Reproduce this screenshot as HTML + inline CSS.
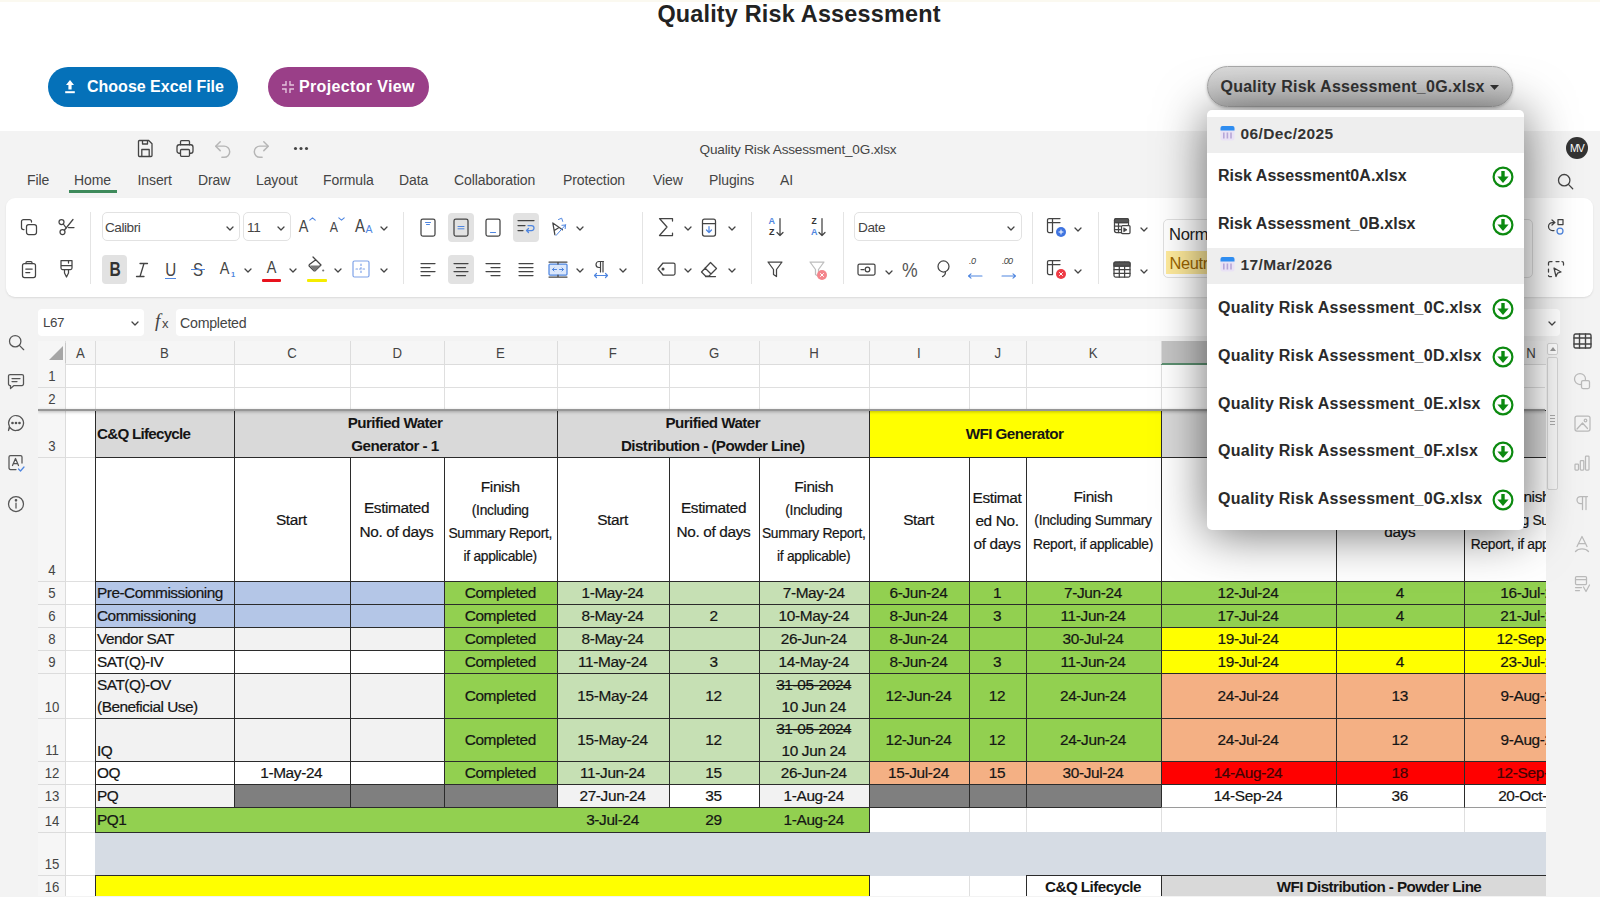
<!DOCTYPE html><html><head><meta charset="utf-8"><title>Quality Risk Assessment</title><style>
*{box-sizing:border-box;margin:0;padding:0}
html,body{width:1600px;height:900px;overflow:hidden;background:#fff}
body{font-family:"Liberation Sans",sans-serif;position:relative;color:#222}
.a{position:absolute}
.t{position:absolute;white-space:nowrap;line-height:1}
svg{position:absolute;overflow:visible}
.btn{position:absolute;border-radius:21px;color:#fff;font-weight:bold;font-size:15.5px}
.mi{position:absolute;top:171.5px;font-size:14px;color:#444;white-space:nowrap;line-height:16px;letter-spacing:-0.1px}
.c{position:absolute;display:flex;align-items:center;justify-content:center;text-align:center;font-size:15.4px;letter-spacing:-0.36px;color:#151515;-webkit-text-stroke:0.2px #151515;white-space:nowrap;line-height:1;padding-right:1.5px}
.c.bk{border:1px solid #2b2b2b}
.c.gl{border:1px solid #e2e2e2}
.c.l{justify-content:flex-start;text-align:left;padding-left:1.5px;letter-spacing:-0.5px}
.c.b{font-weight:bold;letter-spacing:-0.55px;font-size:15.2px;-webkit-text-stroke:0}
.hd{position:absolute;font-size:15px;color:#444;text-align:center;line-height:1;transform:scaleX(.88)}
.ddi{position:absolute;left:11px;font-weight:bold;font-size:16px;color:#2a2a2a;white-space:nowrap;line-height:1;letter-spacing:0px}
.ddh{position:absolute;left:0;width:317px;height:36px;background:#eeeeee}
.ddh span{position:absolute;left:33.5px;top:9px;font-weight:bold;font-size:15.5px;color:#333;line-height:1;letter-spacing:0.38px}
</style></head><body>
<div class="a" style="left:0;top:0;width:1600px;height:2px;background:#fbf9f0"></div>
<div class="t" style="left:498px;width:600px;text-align:center;top:2.5px;left:499px;font-size:23.4px;font-weight:bold;color:#222;letter-spacing:0.2px" id="title">Quality Risk Assessment</div>
<div class="btn" style="left:48px;top:67px;width:190px;height:40px;background:#0571b9"></div>
<svg style="left:63px;top:79px" width="14" height="16" viewBox="0 0 14 16"><path d="M7 1 L11 6 H8.6 V10.5 H5.4 V6 H3 Z" fill="#fff"/><rect x="2.2" y="12.2" width="9.6" height="2" fill="#fff"/></svg>
<div class="t" style="left:87px;top:79.2px;font-size:16px;font-weight:bold;color:#fff" id="b1">Choose Excel File</div>
<div class="btn" style="left:268px;top:67px;width:160.5px;height:40px;background:#9a3f88"></div>
<svg style="left:281px;top:80px" width="14" height="14" viewBox="0 0 14 14" fill="none" stroke="#e3c4dc" stroke-width="1.4"><path d="M5 1v4H1M9 1v4h4M5 13V9H1M9 13V9h4"/></svg>
<div class="t" style="left:299px;top:79.2px;font-size:16px;font-weight:bold;color:#fff;letter-spacing:0.35px" id="b2">Projector View</div>
<div class="a" style="left:1207px;top:66px;width:306px;height:41px;border-radius:21px;background:linear-gradient(#dadada,#bbbbbb);border:1px solid #a8a8a8;box-shadow:0 1px 3px rgba(0,0,0,.25)"></div>
<div class="t" style="left:1220.5px;top:79px;font-size:16px;font-weight:bold;color:#333;letter-spacing:0.25px" id="b3">Quality Risk Assessment_0G.xlsx</div>
<svg style="left:1489.5px;top:85px" width="9" height="5" viewBox="0 0 9 5"><path d="M0 0h9L4.5 5z" fill="#333"/></svg>
<div class="a" style="left:0;top:130.5px;width:1600px;height:766px;background:#f3f3f3"></div>
<div class="t" style="left:598px;width:400px;text-align:center;top:142.5px;font-size:13.6px;color:#444;letter-spacing:-0.18px" id="fname">Quality Risk Assessment_0G.xlsx</div>
<div class="a" style="left:1566px;top:137px;width:22px;height:22px;border-radius:50%;background:#333;color:#fff;font-size:10.5px;text-align:center;line-height:22px;letter-spacing:-0.9px">MV</div>
<svg style="left:137px;top:139px" width="17" height="19" viewBox="0 0 17 19" fill="none" stroke="#444" stroke-width="1.3" stroke-linecap="round" stroke-linejoin="round"><path d="M1.5 2.5a1 1 0 0 1 1-1h9.2l3.3 3.3V16.5a1 1 0 0 1-1 1H2.5a1 1 0 0 1-1-1z"/><path d="M5.5 1.8v3.2h5v-3.200M4.800 17.200v-6.700h7.400v6.700"/></svg>
<svg style="left:176px;top:139px" width="18" height="19" viewBox="0 0 18 18" preserveAspectRatio="none" fill="none" stroke="#444" stroke-width="1.3" stroke-linecap="round" stroke-linejoin="round"><path d="M4.5 5.5v-3a1 1 0 0 1 1-1h7a1 1 0 0 1 1 1v3"/><rect x="1" y="5.5" width="16" height="8" rx="2.2"/><rect x="4.5" y="10" width="9" height="6.5" rx="1" fill="#f3f3f3"/></svg>
<svg style="left:214px;top:139.500px" width="18" height="19" viewBox="0 0 16 17" fill="none" stroke="#b5b5b5" stroke-width="1.3" stroke-linecap="round" stroke-linejoin="round"><path d="M5.5 1.5 1.5 5.5l4 4"/><path d="M1.8 5.5h7.2a5 5 0 0 1 0 10H7"/></svg>
<svg style="left:252px;top:139.500px" width="18" height="19" viewBox="0 0 16 17" fill="none" stroke="#b5b5b5" stroke-width="1.3" stroke-linecap="round" stroke-linejoin="round"><path d="M10.5 1.5l4 4-4 4"/><path d="M14.2 5.5H7a5 5 0 0 0 0 10h2"/></svg>
<svg style="left:294px;top:147px" width="14" height="3" viewBox="0 0 14 3"><circle cx="1.5" cy="1.5" r="1.55" fill="#444"/><circle cx="7" cy="1.5" r="1.55" fill="#444"/><circle cx="12.5" cy="1.5" r="1.55" fill="#444"/></svg>
<div class="mi" id="m0" style="left:27px">File</div>
<div class="mi" id="m1" style="left:74px">Home</div>
<div class="mi" id="m2" style="left:137.5px">Insert</div>
<div class="mi" id="m3" style="left:198px">Draw</div>
<div class="mi" id="m4" style="left:256px">Layout</div>
<div class="mi" id="m5" style="left:323px">Formula</div>
<div class="mi" id="m6" style="left:399px">Data</div>
<div class="mi" id="m7" style="left:454px">Collaboration</div>
<div class="mi" id="m8" style="left:563px">Protection</div>
<div class="mi" id="m9" style="left:653px">View</div>
<div class="mi" id="m10" style="left:709px">Plugins</div>
<div class="mi" id="m11" style="left:780px">AI</div>
<div class="a" style="left:69px;top:190px;width:48px;height:2.5px;background:#3e8a5b"></div>
<svg style="left:1557px;top:173px" width="17" height="17" viewBox="0 0 17 17" fill="none" stroke="#444" stroke-width="1.3" stroke-linecap="round" stroke-linejoin="round"><circle cx="7.2" cy="7.2" r="5.7"/><path d="M11.4 11.4l4.3 4.3"/></svg>
<div class="a" style="left:6px;top:198px;width:1587px;height:99px;background:#fff;border-radius:9px;box-shadow:0 1px 2px rgba(0,0,0,.10)"></div>
<svg style="left:20.0px;top:218.0px" width="18" height="18" viewBox="0 0 18 18" fill="none" stroke="#444" stroke-width="1.25" stroke-linecap="round" stroke-linejoin="round"><rect x="6.5" y="6.5" width="10" height="10" rx="2.2"/><path d="M4 11.5h-.5a2 2 0 0 1-2-2v-6a2 2 0 0 1 2-2h6a2 2 0 0 1 2 2V4"/></svg>
<svg style="left:57.0px;top:218.0px" width="18" height="18" viewBox="0 0 18 18" fill="none" stroke="#444" stroke-width="1.25" stroke-linecap="round" stroke-linejoin="round"><circle cx="4.5" cy="4" r="2.5"/><circle cx="5.5" cy="14" r="2.5"/><path d="M6.3 6l3 4.2M7.5 12 16 1.5M11.5 9.5H17"/></svg>
<svg style="left:21.0px;top:259.5px" width="16" height="19" viewBox="0 0 16 19" fill="none" stroke="#444" stroke-width="1.25" stroke-linecap="round" stroke-linejoin="round"><rect x="1.5" y="3.5" width="13" height="14" rx="2"/><path d="M5 3.5v-1a1 1 0 0 1 1-1h4a1 1 0 0 1 1 1v1M4.8 9h6.4M4.8 12.5h4"/></svg>
<svg style="left:58.5px;top:259.0px" width="15" height="20" viewBox="0 0 15 20" fill="none" stroke="#444" stroke-width="1.25" stroke-linecap="round" stroke-linejoin="round"><path d="M2 1.5h11v7.5a1.5 1.5 0 0 1-1.5 1.5h-8A1.5 1.5 0 0 1 2 9zM2 6.5h11M5.5 10.5v3.5l2 4 2-4v-3.5M9.5 1.5v2.5"/></svg>
<div class="a" style="left:90px;top:212px;width:1px;height:72px;background:#e4e4e4"></div>
<div class="a" style="left:102px;top:212px;width:138px;height:29px;border:1px solid #e2e2e2;border-radius:5px"></div>
<div class="t" style="left:105px;top:221px;font-size:13.6px;color:#444;letter-spacing:-0.45px">Calibri</div>
<svg style="left:226.0px;top:225.5px" width="8" height="5" viewBox="0 0 8 5" fill="none" stroke="#444" stroke-width="1.3" stroke-linecap="round" stroke-linejoin="round"><path d="M1 1l3 3 3-3"/></svg>
<div class="a" style="left:243px;top:212px;width:48px;height:29px;border:1px solid #e2e2e2;border-radius:5px"></div>
<div class="t" style="left:247px;top:221px;font-size:13.6px;color:#444;letter-spacing:-0.3px">11</div>
<svg style="left:277.0px;top:225.5px" width="8" height="5" viewBox="0 0 8 5" fill="none" stroke="#444" stroke-width="1.3" stroke-linecap="round" stroke-linejoin="round"><path d="M1 1l3 3 3-3"/></svg>
<div class="t" style="left:298px;top:218px;font-size:17px;color:#444;transform:scaleX(.85)">A</div>
<svg style="left:308.5px;top:217.0px" width="7" height="4" viewBox="0 0 7 4" fill="none" stroke="#4f86e0" stroke-width="1.1" stroke-linecap="round" stroke-linejoin="round"><path d="M.8 3.2 3.5.8l2.7 2.4"/></svg>
<div class="t" style="left:329px;top:220px;font-size:14.5px;color:#444;transform:scaleX(.85)">A</div>
<svg style="left:337.5px;top:217.0px" width="7" height="4" viewBox="0 0 7 4" fill="none" stroke="#4f86e0" stroke-width="1.1" stroke-linecap="round" stroke-linejoin="round"><path d="M.8.8 3.5 3.2 6.2.8"/></svg>
<div class="t" style="left:354px;top:218px;font-size:17.5px;color:#444;transform:scaleX(.85)">A</div>
<div class="t" style="left:365.5px;top:224px;font-size:10.5px;color:#4f86e0;">A</div>
<svg style="left:380.0px;top:225.5px" width="8" height="5" viewBox="0 0 8 5" fill="none" stroke="#444" stroke-width="1.3" stroke-linecap="round" stroke-linejoin="round"><path d="M1 1l3 3 3-3"/></svg>
<div class="a" style="left:102px;top:255px;width:25px;height:29px;background:#e2e2e2;border-radius:4px"></div>
<div class="t" style="left:108px;top:260px;font-size:19.5px;color:#333;font-weight:bold;transform:scaleX(.8)">B</div>
<svg style="left:135.0px;top:262.0px" width="14" height="16" viewBox="0 0 14 16" fill="none" stroke="#444" stroke-width="1.3" stroke-linecap="round" stroke-linejoin="round"><path d="M5 1.500h7.500M1.500 14.500H9M9 1.500 5 14.500"/></svg>
<div class="t" style="left:163.5px;top:261px;font-size:18.5px;color:#444;transform:scaleX(.82)">U</div>
<div class="a" style="left:165px;top:278px;width:11px;height:1.3px;background:#4f86e0"></div>
<div class="t" style="left:192px;top:261px;font-size:18.5px;color:#444;transform:scaleX(.82)">S</div>
<div class="a" style="left:191px;top:269px;width:14px;height:1.3px;background:#4f86e0"></div>
<div class="t" style="left:219px;top:260px;font-size:17px;color:#444;transform:scaleX(.85)">A</div>
<div class="t" style="left:231px;top:271px;font-size:7.5px;color:#4f86e0;font-weight:bold">1</div>
<svg style="left:244.0px;top:267.5px" width="8" height="5" viewBox="0 0 8 5" fill="none" stroke="#444" stroke-width="1.3" stroke-linecap="round" stroke-linejoin="round"><path d="M1 1l3 3 3-3"/></svg>
<div class="t" style="left:265.5px;top:259px;font-size:17px;color:#444;transform:scaleX(.85)">A</div>
<div class="a" style="left:262px;top:279px;width:19px;height:3px;background:#e8121d;border-radius:1px"></div>
<svg style="left:289.0px;top:267.5px" width="8" height="5" viewBox="0 0 8 5" fill="none" stroke="#444" stroke-width="1.3" stroke-linecap="round" stroke-linejoin="round"><path d="M1 1l3 3 3-3"/></svg>
<svg style="left:306.0px;top:256.0px" width="20" height="20" viewBox="0 0 20 20" fill="none" stroke="#444" stroke-width="1.25" stroke-linecap="round" stroke-linejoin="round"><path d="M8.5 2.5 15 9l-5.6 5.6a1.2 1.2 0 0 1-1.7 0L3.4 10.300a1.2 1.2 0 0 1 0-1.700L9.800 3.800M7 1l2 2"/><path d="M4 9.500h10.500L9.5 14.500H7.500z" fill="#777" stroke="none"/><circle cx="17.200" cy="14.500" r="1.100" fill="#777" stroke="none"/></svg>
<div class="a" style="left:307px;top:279px;width:20px;height:3px;background:#f5ec00;border-radius:1px"></div>
<svg style="left:334.0px;top:267.5px" width="8" height="5" viewBox="0 0 8 5" fill="none" stroke="#444" stroke-width="1.3" stroke-linecap="round" stroke-linejoin="round"><path d="M1 1l3 3 3-3"/></svg>
<svg style="left:352.0px;top:260.0px" width="18" height="18" viewBox="0 0 18 18" fill="none" stroke="#7ea2e8" stroke-width="1.2" stroke-linecap="round" stroke-linejoin="round"><rect x="1" y="1" width="16" height="16" rx="1.500"/><path d="M9 4v10M4 9h10" stroke-dasharray="1.5 2"/></svg>
<svg style="left:380.0px;top:267.5px" width="8" height="5" viewBox="0 0 8 5" fill="none" stroke="#444" stroke-width="1.3" stroke-linecap="round" stroke-linejoin="round"><path d="M1 1l3 3 3-3"/></svg>
<div class="a" style="left:403px;top:212px;width:1px;height:72px;background:#e4e4e4"></div>
<div class="a" style="left:448px;top:213px;width:26px;height:29px;background:#e2e2e2;border-radius:4px"></div>
<div class="a" style="left:513px;top:213px;width:26px;height:29px;background:#e2e2e2;border-radius:4px"></div>
<div class="a" style="left:448px;top:255px;width:26px;height:29px;background:#e2e2e2;border-radius:4px"></div>
<svg style="left:420.0px;top:217.5px" width="16" height="19" viewBox="0 0 16 19" fill="none" stroke="#444" stroke-width="1.25" stroke-linecap="round" stroke-linejoin="round"><rect x="1" y="1" width="14" height="17" rx="1.800"/><path d="M5.500 4.500h5M6.500 6.500h3" stroke="#4f86e0" stroke-width="1"/></svg>
<svg style="left:452.5px;top:217.5px" width="16" height="19" viewBox="0 0 16 19" fill="none" stroke="#444" stroke-width="1.25" stroke-linecap="round" stroke-linejoin="round"><rect x="1" y="1" width="14" height="17" rx="1.800"/><path d="M5 8.500h6M5 10.800h6" stroke="#4f86e0" stroke-width="1"/></svg>
<svg style="left:485.0px;top:217.5px" width="16" height="19" viewBox="0 0 16 19" fill="none" stroke="#444" stroke-width="1.25" stroke-linecap="round" stroke-linejoin="round"><rect x="1" y="1" width="14" height="17" rx="1.800"/><path d="M5.500 14.500h5" stroke="#4f86e0" stroke-width="1.200"/></svg>
<svg style="left:516.5px;top:219.0px" width="18" height="16" viewBox="0 0 18 16" fill="none" stroke="#444" stroke-width="1.25" stroke-linecap="round" stroke-linejoin="round"><path d="M1 1.500h16M1 6.500h7M1 11.500h5"/><path d="M11 6.500h3.500a2.500 2.500 0 0 1 0 5H9.500M11.500 9.500l-2 2 2 2" stroke="#4f86e0"/></svg>
<svg style="left:548.0px;top:217.0px" width="20" height="20" viewBox="0 0 20 20" fill="none" stroke="#444" stroke-width="1.25" stroke-linecap="round" stroke-linejoin="round"><g transform="rotate(-32 8 11)"><path d="M3.500 16 8 5l4.500 11M5.200 12.200h5.600"/></g><path d="M8 18.500 17.500 8M17.500 8l-3.600.3M17.500 8l-.3 3.600M10.500 2.500l3.200-1.300 1 3.200" stroke="#4f86e0" stroke-width="1"/></svg>
<svg style="left:575.5px;top:225.5px" width="8" height="5" viewBox="0 0 8 5" fill="none" stroke="#444" stroke-width="1.3" stroke-linecap="round" stroke-linejoin="round"><path d="M1 1l3 3 3-3"/></svg>
<svg style="left:420.0px;top:261.5px" width="16" height="15" viewBox="0 0 16 15" fill="none" stroke="#444" stroke-width="1.25" stroke-linecap="round" stroke-linejoin="round"><path d="M1 1.500h14M1 5.500h9M1 9.500h14M1 13.500h9"/></svg>
<svg style="left:452.5px;top:261.5px" width="16" height="15" viewBox="0 0 16 15" fill="none" stroke="#444" stroke-width="1.25" stroke-linecap="round" stroke-linejoin="round"><path d="M1 1.500h14M3.500 5.500h9M1 9.500h14M3.500 13.500h9"/></svg>
<svg style="left:485.0px;top:261.5px" width="16" height="15" viewBox="0 0 16 15" fill="none" stroke="#444" stroke-width="1.25" stroke-linecap="round" stroke-linejoin="round"><path d="M1 1.500h14M6 5.500h9M1 9.500h14M6 13.500h9"/></svg>
<svg style="left:517.5px;top:261.5px" width="16" height="15" viewBox="0 0 16 15" fill="none" stroke="#444" stroke-width="1.25" stroke-linecap="round" stroke-linejoin="round"><path d="M1 1.500h14M1 5.500h14M1 9.500h14M1 13.500h14"/></svg>
<svg style="left:548.0px;top:260.5px" width="20" height="17" viewBox="0 0 20 17" fill="none" stroke="#444" stroke-width="1.25" stroke-linecap="round" stroke-linejoin="round"><rect x="1" y="3" width="18" height="11" rx="1" fill="#dbe7fb" stroke="#4f86e0"/><path d="M1 1h18M1 16h18M10 1v2M10 14v2"/><path d="M4.500 8.500h4M6 7 4.500 8.500 6 10M15.500 8.500h-4M14 7l1.500 1.500L14 10" stroke="#4f86e0" stroke-width="1"/></svg>
<svg style="left:575.5px;top:267.5px" width="8" height="5" viewBox="0 0 8 5" fill="none" stroke="#444" stroke-width="1.3" stroke-linecap="round" stroke-linejoin="round"><path d="M1 1l3 3 3-3"/></svg>
<svg style="left:593.0px;top:260.0px" width="16" height="18" viewBox="0 0 16 18" fill="none" stroke="#444" stroke-width="1.2" stroke-linecap="round" stroke-linejoin="round"><path d="M10.500 1.500H6a3 3 0 0 0 0 6h1.500M7.500 1.500V12M10 1.500V12"/><path d="M1.500 15.500h13M3.500 13.500l-2 2 2 2M12.500 13.500l2 2-2 2" stroke="#4f86e0"/></svg>
<svg style="left:618.5px;top:267.5px" width="8" height="5" viewBox="0 0 8 5" fill="none" stroke="#444" stroke-width="1.3" stroke-linecap="round" stroke-linejoin="round"><path d="M1 1l3 3 3-3"/></svg>
<div class="a" style="left:642px;top:212px;width:1px;height:72px;background:#e4e4e4"></div>
<svg style="left:658.0px;top:217.0px" width="16" height="20" viewBox="0 0 16 20" fill="none" stroke="#444" stroke-width="1.25" stroke-linecap="round" stroke-linejoin="round"><path d="M14.500 4V1.500H1.500L9 10l-7.500 8.500h13V16"/></svg>
<svg style="left:684.0px;top:225.5px" width="8" height="5" viewBox="0 0 8 5" fill="none" stroke="#444" stroke-width="1.3" stroke-linecap="round" stroke-linejoin="round"><path d="M1 1l3 3 3-3"/></svg>
<svg style="left:701.0px;top:217.5px" width="16" height="19" viewBox="0 0 16 19" fill="none" stroke="#444" stroke-width="1.25" stroke-linecap="round" stroke-linejoin="round"><rect x="1.500" y="1" width="13" height="17" rx="2"/><path d="M1.500 5.500h13"/><path d="M8 8.500v6M5.500 12l2.500 2.500 2.500-2.500" stroke="#4f86e0"/></svg>
<svg style="left:727.5px;top:225.5px" width="8" height="5" viewBox="0 0 8 5" fill="none" stroke="#444" stroke-width="1.3" stroke-linecap="round" stroke-linejoin="round"><path d="M1 1l3 3 3-3"/></svg>
<svg style="left:656.5px;top:262.0px" width="19" height="14" viewBox="0 0 19 14" fill="none" stroke="#444" stroke-width="1.25" stroke-linecap="round" stroke-linejoin="round"><path d="M6 1h10.500a1.500 1.500 0 0 1 1.500 1.500v9a1.500 1.500 0 0 1-1.500 1.500H6L1 7z"/><circle cx="6" cy="7" r=".900" fill="#444"/></svg>
<svg style="left:684.0px;top:267.5px" width="8" height="5" viewBox="0 0 8 5" fill="none" stroke="#444" stroke-width="1.3" stroke-linecap="round" stroke-linejoin="round"><path d="M1 1l3 3 3-3"/></svg>
<svg style="left:700.0px;top:260.5px" width="18" height="17" viewBox="0 0 18 17" fill="none" stroke="#444" stroke-width="1.25" stroke-linecap="round" stroke-linejoin="round"><path d="M10.500 1.500l6 6-7.500 7.500H5.500L1.500 11zM5 7l6 6M5.500 15.500h10"/></svg>
<svg style="left:727.5px;top:267.5px" width="8" height="5" viewBox="0 0 8 5" fill="none" stroke="#444" stroke-width="1.3" stroke-linecap="round" stroke-linejoin="round"><path d="M1 1l3 3 3-3"/></svg>
<div class="a" style="left:751px;top:212px;width:1px;height:72px;background:#e4e4e4"></div>
<div class="t" style="left:768.5px;top:217px;font-size:9px;color:#4f86e0;font-weight:bold">A</div>
<div class="t" style="left:769px;top:227.5px;font-size:9px;color:#333;font-weight:bold">Z</div>
<svg style="left:775.5px;top:217.0px" width="8" height="20" viewBox="0 0 8 20" fill="none" stroke="#444" stroke-width="1.25" stroke-linecap="round" stroke-linejoin="round"><path d="M4 1.500v17M1 15.500l3 3 3-3"/></svg>
<div class="t" style="left:811.5px;top:217px;font-size:8.5px;color:#333;font-weight:bold">Z</div>
<div class="t" style="left:811px;top:227.5px;font-size:9px;color:#4f86e0;font-weight:bold">A</div>
<svg style="left:818.0px;top:217.0px" width="8" height="20" viewBox="0 0 8 20" fill="none" stroke="#444" stroke-width="1.25" stroke-linecap="round" stroke-linejoin="round"><path d="M4 1.500v17M1 15.500l3 3 3-3"/></svg>
<svg style="left:767.0px;top:260.5px" width="16" height="17" viewBox="0 0 16 17" fill="none" stroke="#444" stroke-width="1.25" stroke-linecap="round" stroke-linejoin="round"><path d="M1 1h14L9.500 8.500v7l-3-2v-5z"/></svg>
<svg style="left:809.0px;top:260.5px" width="16" height="17" viewBox="0 0 16 17" fill="none" stroke="#bdbdbd" stroke-width="1.25" stroke-linecap="round" stroke-linejoin="round"><path d="M1 1h14L9.500 8.500v7l-3-2v-5z"/></svg>
<div class="a" style="left:817px;top:270px;width:10px;height:10px;border-radius:50%;background:#f4858c"></div>
<svg style="left:819.0px;top:272.0px" width="6" height="6" viewBox="0 0 6 6" fill="none" stroke="#fff" stroke-width="1" stroke-linecap="round" stroke-linejoin="round"><path d="M1.500 1.500l3 3M4.500 1.500l-3 3"/></svg>
<div class="a" style="left:843px;top:212px;width:1px;height:72px;background:#e4e4e4"></div>
<div class="a" style="left:854px;top:212px;width:168px;height:29px;border:1px solid #e2e2e2;border-radius:5px"></div>
<div class="t" style="left:858px;top:221px;font-size:13.6px;color:#444;letter-spacing:-0.4px">Date</div>
<svg style="left:1007.0px;top:225.5px" width="8" height="5" viewBox="0 0 8 5" fill="none" stroke="#444" stroke-width="1.3" stroke-linecap="round" stroke-linejoin="round"><path d="M1 1l3 3 3-3"/></svg>
<svg style="left:856.5px;top:262.5px" width="19" height="13" viewBox="0 0 19 13" fill="none" stroke="#444" stroke-width="1.25" stroke-linecap="round" stroke-linejoin="round"><rect x="1" y="1" width="17" height="11" rx="1.500"/><circle cx="10.500" cy="6.500" r="2.300"/><path d="M4 6.500h3"/></svg>
<svg style="left:885.0px;top:269.5px" width="8" height="5" viewBox="0 0 8 5" fill="none" stroke="#444" stroke-width="1.3" stroke-linecap="round" stroke-linejoin="round"><path d="M1 1l3 3 3-3"/></svg>
<div class="t" style="left:901px;top:259.5px;font-size:20px;color:#555;transform:scaleX(.88)">%</div>
<svg style="left:936.5px;top:260.0px" width="13" height="18" viewBox="0 0 13 18" fill="none" stroke="#444" stroke-width="1.25" stroke-linecap="round" stroke-linejoin="round"><circle cx="6.500" cy="6.500" r="5.500"/><path d="M8.500 11.600c0 3-1.500 4.500-3 5"/></svg>
<div class="t" style="left:969px;top:257px;font-size:9px;color:#444;font-style:italic;letter-spacing:-0.5px">.0</div>
<svg style="left:967.0px;top:273.0px" width="16" height="6" viewBox="0 0 16 6" fill="none" stroke="#4f86e0" stroke-width="1.1" stroke-linecap="round" stroke-linejoin="round"><path d="M15 3H1.500M4 .8 1.500 3 4 5.200"/></svg>
<div class="t" style="left:1002px;top:257px;font-size:9px;color:#444;font-style:italic;letter-spacing:-0.8px">.00</div>
<svg style="left:1001.0px;top:273.0px" width="16" height="6" viewBox="0 0 16 6" fill="none" stroke="#4f86e0" stroke-width="1.1" stroke-linecap="round" stroke-linejoin="round"><path d="M1 3h13.500M12 .8 14.500 3 12 5.200"/></svg>
<div class="a" style="left:1032px;top:212px;width:1px;height:72px;background:#e4e4e4"></div>
<svg style="left:1046.0px;top:217.0px" width="18" height="18" viewBox="0 0 18 18" fill="none" stroke="#444" stroke-width="1.25" stroke-linecap="round" stroke-linejoin="round"><path d="M14 1.500H3a1.500 1.500 0 0 0-1.500 1.500v11A1.500 1.500 0 0 0 3 15.500h3.500M1.500 5.500H14M6.500 1.500v14"/></svg>
<div class="a" style="left:1056px;top:227px;width:10px;height:10px;border-radius:50%;background:#3f74e0"></div>
<svg style="left:1058.0px;top:229.0px" width="6" height="6" viewBox="0 0 6 6" fill="none" stroke="#fff" stroke-width="1" stroke-linecap="round" stroke-linejoin="round"><path d="M3 1v4M1 3h4"/></svg>
<svg style="left:1074.0px;top:226.5px" width="8" height="5" viewBox="0 0 8 5" fill="none" stroke="#444" stroke-width="1.3" stroke-linecap="round" stroke-linejoin="round"><path d="M1 1l3 3 3-3"/></svg>
<svg style="left:1046.0px;top:259.0px" width="18" height="18" viewBox="0 0 18 18" fill="none" stroke="#444" stroke-width="1.25" stroke-linecap="round" stroke-linejoin="round"><path d="M14 1.500H3a1.500 1.500 0 0 0-1.500 1.500v11A1.500 1.500 0 0 0 3 15.500h3.500M1.500 5.500H14M6.500 1.500v14"/></svg>
<div class="a" style="left:1056px;top:269px;width:10px;height:10px;border-radius:50%;background:#ee3b45"></div>
<svg style="left:1058.0px;top:271.0px" width="6" height="6" viewBox="0 0 6 6" fill="none" stroke="#fff" stroke-width="1" stroke-linecap="round" stroke-linejoin="round"><path d="M1.500 1.500l3 3M4.500 1.500l-3 3"/></svg>
<svg style="left:1074.0px;top:268.5px" width="8" height="5" viewBox="0 0 8 5" fill="none" stroke="#444" stroke-width="1.3" stroke-linecap="round" stroke-linejoin="round"><path d="M1 1l3 3 3-3"/></svg>
<div class="a" style="left:1098px;top:212px;width:1px;height:72px;background:#e4e4e4"></div>
<svg style="left:1113.0px;top:217.0px" width="18" height="18" viewBox="0 0 18 18" fill="none" stroke="#444" stroke-width="1.25" stroke-linecap="round" stroke-linejoin="round"><rect x="1.500" y="1.500" width="14" height="14" rx="2"/><path d="M1.500 5.500h14M1.500 9h6M1.500 12.500h6M5.500 5.500v10"/><rect x="8.500" y="8.500" width="8.500" height="8" rx="1" fill="#fff"/><path d="M11 11l3 1.800-3 1.800z" fill="#444" stroke-width=".8"/><rect x="1.500" y="1.500" width="14" height="4" fill="#555" rx="1.500"/></svg>
<svg style="left:1140.0px;top:226.5px" width="8" height="5" viewBox="0 0 8 5" fill="none" stroke="#444" stroke-width="1.3" stroke-linecap="round" stroke-linejoin="round"><path d="M1 1l3 3 3-3"/></svg>
<svg style="left:1113.0px;top:260.5px" width="18" height="17" viewBox="0 0 18 17" fill="none" stroke="#444" stroke-width="1.25" stroke-linecap="round" stroke-linejoin="round"><rect x="1" y="1" width="16" height="15" rx="1.500"/><path d="M1 5h16M1 8.700h16M1 12.400h16M6.300 1v15M11.600 1v15"/><rect x="1" y="1" width="16" height="4" fill="#555" rx="1"/></svg>
<svg style="left:1140.0px;top:268.5px" width="8" height="5" viewBox="0 0 8 5" fill="none" stroke="#444" stroke-width="1.3" stroke-linecap="round" stroke-linejoin="round"><path d="M1 1l3 3 3-3"/></svg>
<div class="a" style="left:1163px;top:218.500px;width:370px;height:59px;border:1px solid #e0e0e0;border-radius:5px"></div>
<div class="t" style="left:1169px;top:226.5px;font-size:16.6px;color:#222;letter-spacing:-0.35px">Normal</div>
<div class="a" style="left:1166px;top:251px;width:80px;height:23px;background:#ffeb9c"></div>
<div class="t" style="left:1169.5px;top:255px;font-size:16.4px;color:#9c6500;letter-spacing:-0.35px">Neutral</div>
<svg style="left:1547.0px;top:218.0px" width="18" height="18" viewBox="0 0 18 18" fill="none" stroke="#444" stroke-width="1.25" stroke-linecap="round" stroke-linejoin="round"><path d="M8 4.500H5.500a4 4 0 0 0 0 8H7M5 2 7.800 4.500 5 7"/><rect x="11" y="1.500" width="5" height="5"/><circle cx="13" cy="13" r="3" stroke="#4f86e0"/></svg>
<svg style="left:1547.0px;top:260.0px" width="18" height="18" viewBox="0 0 18 18" fill="none" stroke="#444" stroke-width="1.25" stroke-linecap="round" stroke-linejoin="round"><path d="M1.500 5V3a1.500 1.500 0 0 1 1.500-1.500h2M9 1.500h3M15 1.500a1.500 1.500 0 0 1 1.500 1.500v2M1.500 9v3M1.500 15.500v0a1 1 0 0 0 1 1h2M7 8l7 4-3.500 1.200L9 16.500z"/></svg>
<div class="a" style="left:38px;top:309px;width:106px;height:27px;background:#fff;border-radius:4px"></div>
<div class="t" style="left:43px;top:316px;font-size:13.4px;color:#444;letter-spacing:-0.5px">L67</div>
<svg style="left:131px;top:321px" width="8" height="5" viewBox="0 0 8 5" fill="none" stroke="#444" stroke-width="1.3" stroke-linecap="round" stroke-linejoin="round"><path d="M1 1l3 3 3-3"/></svg>
<div class="t" style="left:155px;top:311px;font-size:19px;color:#444;font-family:'Liberation Serif',serif;font-style:italic">f</div>
<div class="t" style="left:162px;top:317px;font-size:13px;color:#444">x</div>
<div class="a" style="left:176px;top:309px;width:1384px;height:27px;background:#fff;border-radius:4px"></div>
<div class="t" style="left:180px;top:316px;font-size:14.2px;color:#444;letter-spacing:-0.25px" id="fx">Completed</div>
<svg style="left:1548px;top:321px" width="8" height="5" viewBox="0 0 8 5" fill="none" stroke="#444" stroke-width="1.3" stroke-linecap="round" stroke-linejoin="round"><path d="M1 1l3 3 3-3"/></svg>
<svg style="left:7.5px;top:333.5px" width="17" height="17" viewBox="0 0 17 17" fill="none" stroke="#555" stroke-width="1.25" stroke-linecap="round" stroke-linejoin="round"><circle cx="7.200" cy="7.200" r="5.700"/><path d="M11.400 11.400l4.300 4.300"/></svg>
<svg style="left:7.0px;top:372.5px" width="18" height="17" viewBox="0 0 18 17" fill="none" stroke="#555" stroke-width="1.25" stroke-linecap="round" stroke-linejoin="round"><path d="M3 1.500h12a1.500 1.500 0 0 1 1.500 1.500v8a1.500 1.500 0 0 1-1.500 1.500H7l-3.500 3v-3H3A1.500 1.500 0 0 1 1.500 11V3A1.500 1.500 0 0 1 3 1.500zM5 5.500h8M5 8.500h5"/></svg>
<svg style="left:7.0px;top:414.0px" width="18" height="18" viewBox="0 0 18 18" fill="none" stroke="#555" stroke-width="1.25" stroke-linecap="round" stroke-linejoin="round"><path d="M9 1.500a7.500 7.500 0 1 1-6.300 11.600L1.500 16.500l.9-4.200A7.500 7.500 0 0 1 9 1.500z"/><circle cx="5.500" cy="9" r=".7" fill="#555"/><circle cx="9" cy="9" r=".7" fill="#555"/><circle cx="12.500" cy="9" r=".7" fill="#555"/></svg>
<svg style="left:7.0px;top:453.5px" width="18" height="19" viewBox="0 0 18 19" fill="none" stroke="#555" stroke-width="1.25" stroke-linecap="round" stroke-linejoin="round"><path d="M15 9V3a1.500 1.500 0 0 0-1.500-1.500h-10A1.500 1.500 0 0 0 2 3v11a1.500 1.500 0 0 0 1.500 1.500H9M5.500 11.500 8.500 4.500l3 7M6.500 9.500h4"/><path d="M11.500 15l2 2 3.500-4" stroke="#4f86e0"/></svg>
<svg style="left:7.0px;top:495.0px" width="18" height="18" viewBox="0 0 18 18" fill="none" stroke="#555" stroke-width="1.25" stroke-linecap="round" stroke-linejoin="round"><circle cx="9" cy="9" r="7.500"/><path d="M9 8v5"/><circle cx="9" cy="5.300" r=".7" fill="#555"/></svg>
<svg style="left:1572.5px;top:333.0px" width="19" height="16" viewBox="0 0 19 16" fill="none" stroke="#444" stroke-width="1.4" stroke-linecap="round" stroke-linejoin="round"><rect x="1" y="1" width="17" height="14" rx="1.500"/><path d="M1 5h17M1 11h17M6.500 1v14M12.500 1v14"/></svg>
<svg style="left:1573.0px;top:372.0px" width="18" height="18" viewBox="0 0 18 18" fill="none" stroke="#b9b9b9" stroke-width="1.25" stroke-linecap="round" stroke-linejoin="round"><circle cx="7" cy="7" r="5.500"/><rect x="8.500" y="8.500" width="8" height="8" rx="1.500" fill="#f3f3f3"/></svg>
<svg style="left:1573.5px;top:414.5px" width="17" height="17" viewBox="0 0 17 17" fill="none" stroke="#b9b9b9" stroke-width="1.25" stroke-linecap="round" stroke-linejoin="round"><rect x="1" y="1" width="15" height="15" rx="2"/><path d="M3 14l5.500-6 5 5.500"/><circle cx="11.500" cy="5.500" r="1.300"/></svg>
<svg style="left:1574.0px;top:455.0px" width="16" height="16" viewBox="0 0 16 16" fill="none" stroke="#b9b9b9" stroke-width="1.25" stroke-linecap="round" stroke-linejoin="round"><rect x="1" y="9" width="3.500" height="6" rx=".8"/><rect x="6.300" y="5.500" width="3.500" height="9.500" rx=".8"/><rect x="11.500" y="1" width="3.500" height="14" rx=".8"/></svg>
<svg style="left:1575.0px;top:495.0px" width="14" height="16" viewBox="0 0 14 16" fill="none" stroke="#b9b9b9" stroke-width="1.25" stroke-linecap="round" stroke-linejoin="round"><path d="M12.500 1.500H5.500a3.500 3.500 0 0 0 0 7h2M7.500 1.500v13M11 1.500v13"/></svg>
<svg style="left:1574.0px;top:535.0px" width="16" height="18" viewBox="0 0 16 18" fill="none" stroke="#b9b9b9" stroke-width="1.25" stroke-linecap="round" stroke-linejoin="round"><path d="M3 11.500 8 1.500l5 10M4.500 8.500h7M1.500 16.500c3-3.500 10-3.500 13 0"/></svg>
<svg style="left:1573.5px;top:575.0px" width="17" height="18" viewBox="0 0 17 18" fill="none" stroke="#b9b9b9" stroke-width="1.25" stroke-linecap="round" stroke-linejoin="round"><rect x="1.500" y="1.500" width="11" height="8" rx="1"/><path d="M1.500 4.500h11M1.500 12.500h6M1.500 15.500h4M9.500 12l2.500 4.500L15.500 10"/></svg>
<div class="a" style="left:1547px;top:343px;width:11px;height:12px;background:#fff;border:1px solid #d5d5d5;border-radius:2px"></div>
<svg style="left:1549.500px;top:347px" width="6" height="4" viewBox="0 0 6 4"><path d="M0 4h6L3 0z" fill="#999"/></svg>
<div class="a" style="left:1547px;top:357px;width:11px;height:133px;background:#f7f7f7;border:1px solid #d5d5d5;border-radius:2px"></div>
<div class="a" style="left:1550px;top:415px;width:5px;height:1px;background:#aaa"></div><div class="a" style="left:1550px;top:418px;width:5px;height:1px;background:#aaa"></div><div class="a" style="left:1550px;top:421px;width:5px;height:1px;background:#aaa"></div><div class="a" style="left:1550px;top:424px;width:5px;height:1px;background:#aaa"></div>
<div class="a" id="grid" style="left:38px;top:341px;width:1507.5px;height:555px;overflow:hidden;background:#fff">
<div class="a" style="left:56.5px;top:0;width:1px;height:556px;background:#dfdfdf"></div>
<div class="a" style="left:195.5px;top:0;width:1px;height:556px;background:#dfdfdf"></div>
<div class="a" style="left:311.5px;top:0;width:1px;height:556px;background:#dfdfdf"></div>
<div class="a" style="left:406px;top:0;width:1px;height:556px;background:#dfdfdf"></div>
<div class="a" style="left:519px;top:0;width:1px;height:556px;background:#dfdfdf"></div>
<div class="a" style="left:630.5px;top:0;width:1px;height:556px;background:#dfdfdf"></div>
<div class="a" style="left:721px;top:0;width:1px;height:556px;background:#dfdfdf"></div>
<div class="a" style="left:831px;top:0;width:1px;height:556px;background:#dfdfdf"></div>
<div class="a" style="left:930.5px;top:0;width:1px;height:556px;background:#dfdfdf"></div>
<div class="a" style="left:988px;top:0;width:1px;height:556px;background:#dfdfdf"></div>
<div class="a" style="left:1122.5px;top:0;width:1px;height:556px;background:#dfdfdf"></div>
<div class="a" style="left:1298px;top:0;width:1px;height:556px;background:#dfdfdf"></div>
<div class="a" style="left:1426px;top:0;width:1px;height:556px;background:#dfdfdf"></div>
<div class="a" style="left:1560px;top:0;width:1px;height:556px;background:#dfdfdf"></div>
<div class="a" style="left:0;top:46px;width:1507px;height:1px;background:#dfdfdf"></div>
<div class="a" style="left:0;top:69px;width:1507px;height:1px;background:#dfdfdf"></div>
<div class="a" style="left:0;top:116px;width:1507px;height:1px;background:#dfdfdf"></div>
<div class="a" style="left:0;top:240px;width:1507px;height:1px;background:#dfdfdf"></div>
<div class="a" style="left:0;top:263px;width:1507px;height:1px;background:#dfdfdf"></div>
<div class="a" style="left:0;top:286px;width:1507px;height:1px;background:#dfdfdf"></div>
<div class="a" style="left:0;top:309px;width:1507px;height:1px;background:#dfdfdf"></div>
<div class="a" style="left:0;top:332px;width:1507px;height:1px;background:#dfdfdf"></div>
<div class="a" style="left:0;top:377px;width:1507px;height:1px;background:#dfdfdf"></div>
<div class="a" style="left:0;top:420px;width:1507px;height:1px;background:#dfdfdf"></div>
<div class="a" style="left:0;top:443px;width:1507px;height:1px;background:#dfdfdf"></div>
<div class="a" style="left:0;top:466px;width:1507px;height:1px;background:#dfdfdf"></div>
<div class="a" style="left:0;top:491px;width:1507px;height:1px;background:#dfdfdf"></div>
<div class="a" style="left:0;top:534px;width:1507px;height:1px;background:#dfdfdf"></div>
<div class="a" style="left:0;top:557px;width:1507px;height:1px;background:#dfdfdf"></div>
<div class="a" style="left:0;top:0;width:1508px;height:24px;background:#f6f6f6;border-bottom:1px solid #dcdcdc"></div>
<div class="a" style="left:0;top:0;width:28px;height:556px;background:#f6f6f6;border-right:1px solid #dcdcdc"></div>
<div class="a" style="left:1122.5px;top:0;width:175.5px;height:24px;background:#c5c5c5;border-bottom:2px solid #5c8f70"></div>
<div class="hd" style="left:27.5px;width:29.0px;top:4px">A</div>
<div class="hd" style="left:56.5px;width:139.0px;top:4px">B</div>
<div class="a" style="left:56.5px;top:0;width:1px;height:23px;background:#dcdcdc"></div>
<div class="hd" style="left:195.5px;width:116.0px;top:4px">C</div>
<div class="a" style="left:195.5px;top:0;width:1px;height:23px;background:#dcdcdc"></div>
<div class="hd" style="left:311.5px;width:94.5px;top:4px">D</div>
<div class="a" style="left:311.5px;top:0;width:1px;height:23px;background:#dcdcdc"></div>
<div class="hd" style="left:406px;width:113px;top:4px">E</div>
<div class="a" style="left:406px;top:0;width:1px;height:23px;background:#dcdcdc"></div>
<div class="hd" style="left:519px;width:111.5px;top:4px">F</div>
<div class="a" style="left:519px;top:0;width:1px;height:23px;background:#dcdcdc"></div>
<div class="hd" style="left:630.5px;width:90.5px;top:4px">G</div>
<div class="a" style="left:630.5px;top:0;width:1px;height:23px;background:#dcdcdc"></div>
<div class="hd" style="left:721px;width:110px;top:4px">H</div>
<div class="a" style="left:721px;top:0;width:1px;height:23px;background:#dcdcdc"></div>
<div class="hd" style="left:831px;width:99.5px;top:4px">I</div>
<div class="a" style="left:831px;top:0;width:1px;height:23px;background:#dcdcdc"></div>
<div class="hd" style="left:930.5px;width:57.5px;top:4px">J</div>
<div class="a" style="left:930.5px;top:0;width:1px;height:23px;background:#dcdcdc"></div>
<div class="hd" style="left:988px;width:134.5px;top:4px">K</div>
<div class="a" style="left:988px;top:0;width:1px;height:23px;background:#dcdcdc"></div>
<div class="hd" style="left:1122.5px;width:175.5px;top:4px">L</div>
<div class="a" style="left:1122.5px;top:0;width:1px;height:23px;background:#dcdcdc"></div>
<div class="hd" style="left:1298px;width:128px;top:4px">M</div>
<div class="a" style="left:1298px;top:0;width:1px;height:23px;background:#dcdcdc"></div>
<div class="hd" style="left:1426px;width:134px;top:4px">N</div>
<div class="a" style="left:1426px;top:0;width:1px;height:23px;background:#dcdcdc"></div>
<svg style="left:11px;top:5px" width="15" height="15" viewBox="0 0 15 15"><path d="M14 0V14H0z" fill="#a6a6a6"/></svg>
<div class="a" style="left:27px;top:2px;width:1px;height:20px;background:#c9c9c9"></div>
<div class="hd" style="left:0;width:28px;top:26.5px">1</div>
<div class="a" style="left:0;top:46px;width:28px;height:1px;background:#dcdcdc"></div>
<div class="hd" style="left:0;width:28px;top:49.5px">2</div>
<div class="a" style="left:0;top:69px;width:28px;height:1px;background:#dcdcdc"></div>
<div class="hd" style="left:0;width:28px;top:96.5px">3</div>
<div class="a" style="left:0;top:116px;width:28px;height:1px;background:#dcdcdc"></div>
<div class="hd" style="left:0;width:28px;top:220.5px">4</div>
<div class="a" style="left:0;top:240px;width:28px;height:1px;background:#dcdcdc"></div>
<div class="hd" style="left:0;width:28px;top:243.5px">5</div>
<div class="a" style="left:0;top:263px;width:28px;height:1px;background:#dcdcdc"></div>
<div class="hd" style="left:0;width:28px;top:266.5px">6</div>
<div class="a" style="left:0;top:286px;width:28px;height:1px;background:#dcdcdc"></div>
<div class="hd" style="left:0;width:28px;top:289.5px">8</div>
<div class="a" style="left:0;top:309px;width:28px;height:1px;background:#dcdcdc"></div>
<div class="hd" style="left:0;width:28px;top:312.5px">9</div>
<div class="a" style="left:0;top:332px;width:28px;height:1px;background:#dcdcdc"></div>
<div class="hd" style="left:0;width:28px;top:357.5px">10</div>
<div class="a" style="left:0;top:377px;width:28px;height:1px;background:#dcdcdc"></div>
<div class="hd" style="left:0;width:28px;top:400.5px">11</div>
<div class="a" style="left:0;top:420px;width:28px;height:1px;background:#dcdcdc"></div>
<div class="hd" style="left:0;width:28px;top:423.5px">12</div>
<div class="a" style="left:0;top:443px;width:28px;height:1px;background:#dcdcdc"></div>
<div class="hd" style="left:0;width:28px;top:446.5px">13</div>
<div class="a" style="left:0;top:466px;width:28px;height:1px;background:#dcdcdc"></div>
<div class="hd" style="left:0;width:28px;top:471.5px">14</div>
<div class="a" style="left:0;top:491px;width:28px;height:1px;background:#dcdcdc"></div>
<div class="hd" style="left:0;width:28px;top:514.5px">15</div>
<div class="a" style="left:0;top:534px;width:28px;height:1px;background:#dcdcdc"></div>
<div class="hd" style="left:0;width:28px;top:537.5px">16</div>
<div class="a" style="left:0;top:557px;width:28px;height:1px;background:#dcdcdc"></div>
<div class="c " style="left:56.5px;top:491px;width:1504.5px;height:44px;background:#d6dce4;"></div>
<div class="c bk" style="left:56.5px;top:534px;width:775.5px;height:24px;background:#ffff00;"></div>
<div class="c bk b" style="left:988px;top:534px;width:135.5px;height:24px;background:#ffffff;"><div>C&amp;Q Lifecycle</div></div>
<div class="c bk b" style="left:1122.5px;top:534px;width:438.5px;height:24px;background:#d9d9d9;"><div>WFI Distribution - Powder Line</div></div>
<div class="c bk b l" style="left:56.5px;top:69px;width:140.0px;height:48px;background:#d9d9d9;letter-spacing:-0.75px;"><div>C&amp;Q Lifecycle</div></div>
<div class="c bk b" style="left:195.5px;top:69px;width:324.5px;height:48px;background:#d9d9d9;line-height:23px;padding-bottom:1px;"><div>Purified Water<br>Generator - 1</div></div>
<div class="c bk b" style="left:519px;top:69px;width:313px;height:48px;background:#d9d9d9;line-height:23px;padding-bottom:1px;"><div>Purified Water<br>Distribution - (Powder Line)</div></div>
<div class="c bk b" style="left:831px;top:69px;width:292.5px;height:48px;background:#ffff00;"><div>WFI Generator</div></div>
<div class="c bk b" style="left:1122.5px;top:69px;width:438.5px;height:48px;background:#d9d9d9;"></div>
<div class="c bk" style="left:56.5px;top:116px;width:140.0px;height:125px;background:#ffffff;"></div>
<div class="c bk" style="left:195.5px;top:116px;width:117.0px;height:125px;background:#ffffff;"><div>Start</div></div>
<div class="c bk" style="left:311.5px;top:116px;width:95.5px;height:125px;background:#ffffff;line-height:24px;"><div>Estimated<br>No. of days</div></div>
<div class="c bk" style="left:406px;top:116px;width:114px;height:125px;background:#ffffff;line-height:22px;padding-top:2px;"><div><div style="line-height:25px">Finish</div><span style="font-size:13.8px;letter-spacing:-0.3px">(Including<br>Summary Report,<br>if applicable)</span></div></div>
<div class="c bk" style="left:519px;top:116px;width:112.5px;height:125px;background:#ffffff;"><div>Start</div></div>
<div class="c bk" style="left:630.5px;top:116px;width:91.5px;height:125px;background:#ffffff;line-height:24px;"><div>Estimated<br>No. of days</div></div>
<div class="c bk" style="left:721px;top:116px;width:111px;height:125px;background:#ffffff;line-height:22px;padding-top:2px;"><div><div style="line-height:25px">Finish</div><span style="font-size:13.8px;letter-spacing:-0.3px">(Including<br>Summary Report,<br>if applicable)</span></div></div>
<div class="c bk" style="left:831px;top:116px;width:100.5px;height:125px;background:#ffffff;"><div>Start</div></div>
<div class="c bk" style="left:930.5px;top:116px;width:58.5px;height:125px;background:#ffffff;line-height:23px;padding-top:1.5px;"><div>Estimat<br>ed No.<br>of days</div></div>
<div class="c bk" style="left:988px;top:116px;width:135.5px;height:125px;background:#ffffff;line-height:23px;padding-top:1.5px;"><div>Finish<br><span style="font-size:13.8px;letter-spacing:-0.3px">(Including Summary<br>Report, if applicable)</span></div></div>
<div class="c bk" style="left:1122.5px;top:116px;width:176.5px;height:125px;background:#ffffff;"><div>Start</div></div>
<div class="c bk" style="left:1298px;top:116px;width:129px;height:125px;background:#ffffff;line-height:24px;"><div>Estimated No. of<br>days</div></div>
<div class="c bk" style="left:1426px;top:116px;width:135px;height:125px;background:#ffffff;line-height:23px;padding-top:1.5px;"><div>Finish<br><span style="font-size:13.8px;letter-spacing:-0.3px">(Including Summary<br>Report, if applicable)</span></div></div>
<div class="c bk l" style="left:56.5px;top:240px;width:140.0px;height:24px;background:#b4c6e7;"><div>Pre-Commissioning</div></div>
<div class="c bk" style="left:195.5px;top:240px;width:117.0px;height:24px;background:#b4c6e7;"></div>
<div class="c bk" style="left:311.5px;top:240px;width:95.5px;height:24px;background:#b4c6e7;"></div>
<div class="c bk" style="left:406px;top:240px;width:114px;height:24px;background:#92d050;"><div>Completed</div></div>
<div class="c bk" style="left:519px;top:240px;width:112.5px;height:24px;background:#c6e0b4;"><div>1-May-24</div></div>
<div class="c bk" style="left:630.5px;top:240px;width:91.5px;height:24px;background:#c6e0b4;"></div>
<div class="c bk" style="left:721px;top:240px;width:111px;height:24px;background:#c6e0b4;"><div>7-May-24</div></div>
<div class="c bk" style="left:831px;top:240px;width:100.5px;height:24px;background:#92d050;"><div>6-Jun-24</div></div>
<div class="c bk" style="left:930.5px;top:240px;width:58.5px;height:24px;background:#92d050;"><div>1</div></div>
<div class="c bk" style="left:988px;top:240px;width:135.5px;height:24px;background:#92d050;"><div>7-Jun-24</div></div>
<div class="c bk" style="left:1122.5px;top:240px;width:176.5px;height:24px;background:#92d050;"><div>12-Jul-24</div></div>
<div class="c bk" style="left:1298px;top:240px;width:129px;height:24px;background:#92d050;"><div>4</div></div>
<div class="c bk" style="left:1426px;top:240px;width:135px;height:24px;background:#92d050;"><div>16-Jul-24</div></div>
<div class="c bk l" style="left:56.5px;top:263px;width:140.0px;height:24px;background:#b4c6e7;"><div>Commissioning</div></div>
<div class="c bk" style="left:195.5px;top:263px;width:117.0px;height:24px;background:#b4c6e7;"></div>
<div class="c bk" style="left:311.5px;top:263px;width:95.5px;height:24px;background:#b4c6e7;"></div>
<div class="c bk" style="left:406px;top:263px;width:114px;height:24px;background:#92d050;"><div>Completed</div></div>
<div class="c bk" style="left:519px;top:263px;width:112.5px;height:24px;background:#c6e0b4;"><div>8-May-24</div></div>
<div class="c bk" style="left:630.5px;top:263px;width:91.5px;height:24px;background:#c6e0b4;"><div>2</div></div>
<div class="c bk" style="left:721px;top:263px;width:111px;height:24px;background:#c6e0b4;"><div>10-May-24</div></div>
<div class="c bk" style="left:831px;top:263px;width:100.5px;height:24px;background:#92d050;"><div>8-Jun-24</div></div>
<div class="c bk" style="left:930.5px;top:263px;width:58.5px;height:24px;background:#92d050;"><div>3</div></div>
<div class="c bk" style="left:988px;top:263px;width:135.5px;height:24px;background:#92d050;"><div>11-Jun-24</div></div>
<div class="c bk" style="left:1122.5px;top:263px;width:176.5px;height:24px;background:#92d050;"><div>17-Jul-24</div></div>
<div class="c bk" style="left:1298px;top:263px;width:129px;height:24px;background:#92d050;"><div>4</div></div>
<div class="c bk" style="left:1426px;top:263px;width:135px;height:24px;background:#92d050;"><div>21-Jul-24</div></div>
<div class="c bk l" style="left:56.5px;top:286px;width:140.0px;height:24px;background:#f2f2f2;"><div>Vendor SAT</div></div>
<div class="c bk" style="left:195.5px;top:286px;width:117.0px;height:24px;background:#f2f2f2;"></div>
<div class="c bk" style="left:311.5px;top:286px;width:95.5px;height:24px;background:#f2f2f2;"></div>
<div class="c bk" style="left:406px;top:286px;width:114px;height:24px;background:#92d050;"><div>Completed</div></div>
<div class="c bk" style="left:519px;top:286px;width:112.5px;height:24px;background:#c6e0b4;"><div>8-May-24</div></div>
<div class="c bk" style="left:630.5px;top:286px;width:91.5px;height:24px;background:#c6e0b4;"></div>
<div class="c bk" style="left:721px;top:286px;width:111px;height:24px;background:#c6e0b4;"><div>26-Jun-24</div></div>
<div class="c bk" style="left:831px;top:286px;width:100.5px;height:24px;background:#92d050;"><div>8-Jun-24</div></div>
<div class="c bk" style="left:930.5px;top:286px;width:58.5px;height:24px;background:#92d050;"></div>
<div class="c bk" style="left:988px;top:286px;width:135.5px;height:24px;background:#92d050;"><div>30-Jul-24</div></div>
<div class="c bk" style="left:1122.5px;top:286px;width:176.5px;height:24px;background:#ffff00;"><div>19-Jul-24</div></div>
<div class="c bk" style="left:1298px;top:286px;width:129px;height:24px;background:#ffff00;"></div>
<div class="c bk" style="left:1426px;top:286px;width:135px;height:24px;background:#ffff00;"><div>12-Sep-24</div></div>
<div class="c bk l" style="left:56.5px;top:309px;width:140.0px;height:24px;background:#ffffff;"><div>SAT(Q)-IV</div></div>
<div class="c bk" style="left:195.5px;top:309px;width:117.0px;height:24px;background:#ffffff;"></div>
<div class="c bk" style="left:311.5px;top:309px;width:95.5px;height:24px;background:#ffffff;"></div>
<div class="c bk" style="left:406px;top:309px;width:114px;height:24px;background:#92d050;"><div>Completed</div></div>
<div class="c bk" style="left:519px;top:309px;width:112.5px;height:24px;background:#c6e0b4;"><div>11-May-24</div></div>
<div class="c bk" style="left:630.5px;top:309px;width:91.5px;height:24px;background:#c6e0b4;"><div>3</div></div>
<div class="c bk" style="left:721px;top:309px;width:111px;height:24px;background:#c6e0b4;"><div>14-May-24</div></div>
<div class="c bk" style="left:831px;top:309px;width:100.5px;height:24px;background:#92d050;"><div>8-Jun-24</div></div>
<div class="c bk" style="left:930.5px;top:309px;width:58.5px;height:24px;background:#92d050;"><div>3</div></div>
<div class="c bk" style="left:988px;top:309px;width:135.5px;height:24px;background:#92d050;"><div>11-Jun-24</div></div>
<div class="c bk" style="left:1122.5px;top:309px;width:176.5px;height:24px;background:#ffff00;"><div>19-Jul-24</div></div>
<div class="c bk" style="left:1298px;top:309px;width:129px;height:24px;background:#ffff00;"><div>4</div></div>
<div class="c bk" style="left:1426px;top:309px;width:135px;height:24px;background:#ffff00;"><div>23-Jul-24</div></div>
<div class="c bk l" style="left:56.5px;top:332px;width:140.0px;height:46px;background:#f2f2f2;line-height:22.5px;"><div>SAT(Q)-OV<br>(Beneficial Use)</div></div>
<div class="c bk" style="left:195.5px;top:332px;width:117.0px;height:46px;background:#f2f2f2;"></div>
<div class="c bk" style="left:311.5px;top:332px;width:95.5px;height:46px;background:#f2f2f2;"></div>
<div class="c bk" style="left:406px;top:332px;width:114px;height:46px;background:#92d050;"><div>Completed</div></div>
<div class="c bk" style="left:519px;top:332px;width:112.5px;height:46px;background:#c6e0b4;"><div>15-May-24</div></div>
<div class="c bk" style="left:630.5px;top:332px;width:91.5px;height:46px;background:#c6e0b4;"><div>12</div></div>
<div class="c bk" style="left:721px;top:332px;width:111px;height:46px;background:#c6e0b4;line-height:22px;"><div><span style="text-decoration:line-through">31-05-2024</span><br>10 Jun 24</div></div>
<div class="c bk" style="left:831px;top:332px;width:100.5px;height:46px;background:#92d050;"><div>12-Jun-24</div></div>
<div class="c bk" style="left:930.5px;top:332px;width:58.5px;height:46px;background:#92d050;"><div>12</div></div>
<div class="c bk" style="left:988px;top:332px;width:135.5px;height:46px;background:#92d050;"><div>24-Jun-24</div></div>
<div class="c bk" style="left:1122.5px;top:332px;width:176.5px;height:46px;background:#f4b084;"><div>24-Jul-24</div></div>
<div class="c bk" style="left:1298px;top:332px;width:129px;height:46px;background:#f4b084;"><div>13</div></div>
<div class="c bk" style="left:1426px;top:332px;width:135px;height:46px;background:#f4b084;"><div>9-Aug-24</div></div>
<div class="c bk l" style="left:56.5px;top:377px;width:140.0px;height:44px;background:#f2f2f2;align-items:flex-end;padding-bottom:3px;"><div>IQ</div></div>
<div class="c bk" style="left:195.5px;top:377px;width:117.0px;height:44px;background:#f2f2f2;"></div>
<div class="c bk" style="left:311.5px;top:377px;width:95.5px;height:44px;background:#f2f2f2;"></div>
<div class="c bk" style="left:406px;top:377px;width:114px;height:44px;background:#92d050;"><div>Completed</div></div>
<div class="c bk" style="left:519px;top:377px;width:112.5px;height:44px;background:#c6e0b4;"><div>15-May-24</div></div>
<div class="c bk" style="left:630.5px;top:377px;width:91.5px;height:44px;background:#c6e0b4;"><div>12</div></div>
<div class="c bk" style="left:721px;top:377px;width:111px;height:44px;background:#c6e0b4;line-height:22px;"><div><span style="text-decoration:line-through">31-05-2024</span><br>10 Jun 24</div></div>
<div class="c bk" style="left:831px;top:377px;width:100.5px;height:44px;background:#92d050;"><div>12-Jun-24</div></div>
<div class="c bk" style="left:930.5px;top:377px;width:58.5px;height:44px;background:#92d050;"><div>12</div></div>
<div class="c bk" style="left:988px;top:377px;width:135.5px;height:44px;background:#92d050;"><div>24-Jun-24</div></div>
<div class="c bk" style="left:1122.5px;top:377px;width:176.5px;height:44px;background:#f4b084;"><div>24-Jul-24</div></div>
<div class="c bk" style="left:1298px;top:377px;width:129px;height:44px;background:#f4b084;"><div>12</div></div>
<div class="c bk" style="left:1426px;top:377px;width:135px;height:44px;background:#f4b084;"><div>9-Aug-24</div></div>
<div class="c bk l" style="left:56.5px;top:420px;width:140.0px;height:24px;background:#ffffff;"><div>OQ</div></div>
<div class="c bk" style="left:195.5px;top:420px;width:117.0px;height:24px;background:#ffffff;"><div>1-May-24</div></div>
<div class="c bk" style="left:311.5px;top:420px;width:95.5px;height:24px;background:#ffffff;"></div>
<div class="c bk" style="left:406px;top:420px;width:114px;height:24px;background:#92d050;"><div>Completed</div></div>
<div class="c bk" style="left:519px;top:420px;width:112.5px;height:24px;background:#c6e0b4;"><div>11-Jun-24</div></div>
<div class="c bk" style="left:630.5px;top:420px;width:91.5px;height:24px;background:#c6e0b4;"><div>15</div></div>
<div class="c bk" style="left:721px;top:420px;width:111px;height:24px;background:#c6e0b4;"><div>26-Jun-24</div></div>
<div class="c bk" style="left:831px;top:420px;width:100.5px;height:24px;background:#f4b084;"><div>15-Jul-24</div></div>
<div class="c bk" style="left:930.5px;top:420px;width:58.5px;height:24px;background:#f4b084;"><div>15</div></div>
<div class="c bk" style="left:988px;top:420px;width:135.5px;height:24px;background:#f4b084;"><div>30-Jul-24</div></div>
<div class="c bk" style="left:1122.5px;top:420px;width:176.5px;height:24px;background:#ff0000;color:#4a0000;"><div>14-Aug-24</div></div>
<div class="c bk" style="left:1298px;top:420px;width:129px;height:24px;background:#ff0000;color:#4a0000;"><div>18</div></div>
<div class="c bk" style="left:1426px;top:420px;width:135px;height:24px;background:#ff0000;color:#4a0000;"><div>12-Sep-24</div></div>
<div class="c bk l" style="left:56.5px;top:443px;width:140.0px;height:24px;background:#f2f2f2;"><div>PQ</div></div>
<div class="c bk" style="left:195.5px;top:443px;width:117.0px;height:24px;background:#7f7f7f;"></div>
<div class="c bk" style="left:311.5px;top:443px;width:95.5px;height:24px;background:#7f7f7f;"></div>
<div class="c bk" style="left:406px;top:443px;width:114px;height:24px;background:#7f7f7f;"></div>
<div class="c bk" style="left:519px;top:443px;width:112.5px;height:24px;background:#f2f2f2;"><div>27-Jun-24</div></div>
<div class="c bk" style="left:630.5px;top:443px;width:91.5px;height:24px;background:#ffffff;"><div>35</div></div>
<div class="c bk" style="left:721px;top:443px;width:111px;height:24px;background:#f2f2f2;"><div>1-Aug-24</div></div>
<div class="c bk" style="left:831px;top:443px;width:100.5px;height:24px;background:#7f7f7f;"></div>
<div class="c bk" style="left:930.5px;top:443px;width:58.5px;height:24px;background:#7f7f7f;"></div>
<div class="c bk" style="left:988px;top:443px;width:135.5px;height:24px;background:#7f7f7f;"></div>
<div class="c bk" style="left:1122.5px;top:443px;width:176.5px;height:24px;background:#ffffff;border-bottom-color:#9a9a9a;"><div>14-Sep-24</div></div>
<div class="c bk" style="left:1298px;top:443px;width:129px;height:24px;background:#ffffff;border-bottom-color:#9a9a9a;"><div>36</div></div>
<div class="c bk" style="left:1426px;top:443px;width:135px;height:24px;background:#ffffff;border-bottom-color:#9a9a9a;"><div>20-Oct-24</div></div>
<div class="c bk l" style="left:56.5px;top:466px;width:775.5px;height:26px;background:#92d050;"><div>PQ1</div></div>
<div class="c " style="left:519px;top:466px;width:112.5px;height:26px;"><div>3-Jul-24</div></div>
<div class="c " style="left:630.5px;top:466px;width:91.5px;height:26px;"><div>29</div></div>
<div class="c " style="left:721px;top:466px;width:111px;height:26px;"><div>1-Aug-24</div></div>
<div class="a" style="left:0;top:68px;width:1507px;height:2px;background:#969696;box-shadow:0 1px 3px rgba(0,0,0,.3)"></div>
</div>
<div class="a" id="dd" style="left:1207px;top:110px;width:317px;height:420px;background:#fff;border-radius:5px;box-shadow:0 3px 50px rgba(0,0,0,.58)">
<div class="ddh" style="top:7px"><svg style="left:12.5px;top:8.3px" width="15" height="16" viewBox="0 0 15 16"><rect x="0.5" y="1" width="14" height="14.5" rx="2" fill="#e9e2f5"/><path d="M0.5 3a2 2 0 0 1 2-2h10a2 2 0 0 1 2 2v2.5h-14z" fill="#2f8df0"/><g fill="#b7a6d8"><rect x="3" y="7.5" width="1.6" height="6"/><rect x="6.6" y="7.5" width="1.6" height="6"/><rect x="10.2" y="7.5" width="1.6" height="6"/></g></svg><span>06/Dec/2025</span></div>
<div class="ddh" style="top:138px"><svg style="left:12.5px;top:8.3px" width="15" height="16" viewBox="0 0 15 16"><rect x="0.5" y="1" width="14" height="14.5" rx="2" fill="#e9e2f5"/><path d="M0.5 3a2 2 0 0 1 2-2h10a2 2 0 0 1 2 2v2.5h-14z" fill="#2f8df0"/><g fill="#b7a6d8"><rect x="3" y="7.5" width="1.6" height="6"/><rect x="6.6" y="7.5" width="1.6" height="6"/><rect x="10.2" y="7.5" width="1.6" height="6"/></g></svg><span>17/Mar/2026</span></div>
<div class="ddi" id="dd0" style="top:58px;letter-spacing:0.03px">Risk Assessment0A.xlsx</div>
<svg style="left:284.7px;top:56px" width="22" height="22" viewBox="0 0 22 22"><circle cx="11" cy="11" r="9.4" fill="#fff" stroke="#0c8a10" stroke-width="2.2"/><path d="M11 5v7.2" stroke="#0c8a10" stroke-width="3.4" fill="none"/><path d="M5.4 10.4h11.2L11 17z" fill="#0c8a10"/></svg>
<div class="ddi" id="dd1" style="top:106px;letter-spacing:0.03px">Risk Assessment_0B.xlsx</div>
<svg style="left:284.7px;top:104px" width="22" height="22" viewBox="0 0 22 22"><circle cx="11" cy="11" r="9.4" fill="#fff" stroke="#0c8a10" stroke-width="2.2"/><path d="M11 5v7.2" stroke="#0c8a10" stroke-width="3.4" fill="none"/><path d="M5.4 10.4h11.2L11 17z" fill="#0c8a10"/></svg>
<div class="ddi" id="dd2" style="top:190px;letter-spacing:0.26px">Quality Risk Assessment_0C.xlsx</div>
<svg style="left:284.7px;top:188px" width="22" height="22" viewBox="0 0 22 22"><circle cx="11" cy="11" r="9.4" fill="#fff" stroke="#0c8a10" stroke-width="2.2"/><path d="M11 5v7.2" stroke="#0c8a10" stroke-width="3.4" fill="none"/><path d="M5.4 10.4h11.2L11 17z" fill="#0c8a10"/></svg>
<div class="ddi" id="dd3" style="top:238px;letter-spacing:0.26px">Quality Risk Assessment_0D.xlsx</div>
<svg style="left:284.7px;top:236px" width="22" height="22" viewBox="0 0 22 22"><circle cx="11" cy="11" r="9.4" fill="#fff" stroke="#0c8a10" stroke-width="2.2"/><path d="M11 5v7.2" stroke="#0c8a10" stroke-width="3.4" fill="none"/><path d="M5.4 10.4h11.2L11 17z" fill="#0c8a10"/></svg>
<div class="ddi" id="dd4" style="top:286px;letter-spacing:0.26px">Quality Risk Assessment_0E.xlsx</div>
<svg style="left:284.7px;top:284px" width="22" height="22" viewBox="0 0 22 22"><circle cx="11" cy="11" r="9.4" fill="#fff" stroke="#0c8a10" stroke-width="2.2"/><path d="M11 5v7.2" stroke="#0c8a10" stroke-width="3.4" fill="none"/><path d="M5.4 10.4h11.2L11 17z" fill="#0c8a10"/></svg>
<div class="ddi" id="dd5" style="top:333px;letter-spacing:0.26px">Quality Risk Assessment_0F.xlsx</div>
<svg style="left:284.7px;top:331px" width="22" height="22" viewBox="0 0 22 22"><circle cx="11" cy="11" r="9.4" fill="#fff" stroke="#0c8a10" stroke-width="2.2"/><path d="M11 5v7.2" stroke="#0c8a10" stroke-width="3.4" fill="none"/><path d="M5.4 10.4h11.2L11 17z" fill="#0c8a10"/></svg>
<div class="ddi" id="dd6" style="top:381px;letter-spacing:0.26px">Quality Risk Assessment_0G.xlsx</div>
<svg style="left:284.7px;top:379px" width="22" height="22" viewBox="0 0 22 22"><circle cx="11" cy="11" r="9.4" fill="#fff" stroke="#0c8a10" stroke-width="2.2"/><path d="M11 5v7.2" stroke="#0c8a10" stroke-width="3.4" fill="none"/><path d="M5.4 10.4h11.2L11 17z" fill="#0c8a10"/></svg>
</div>
</body></html>
